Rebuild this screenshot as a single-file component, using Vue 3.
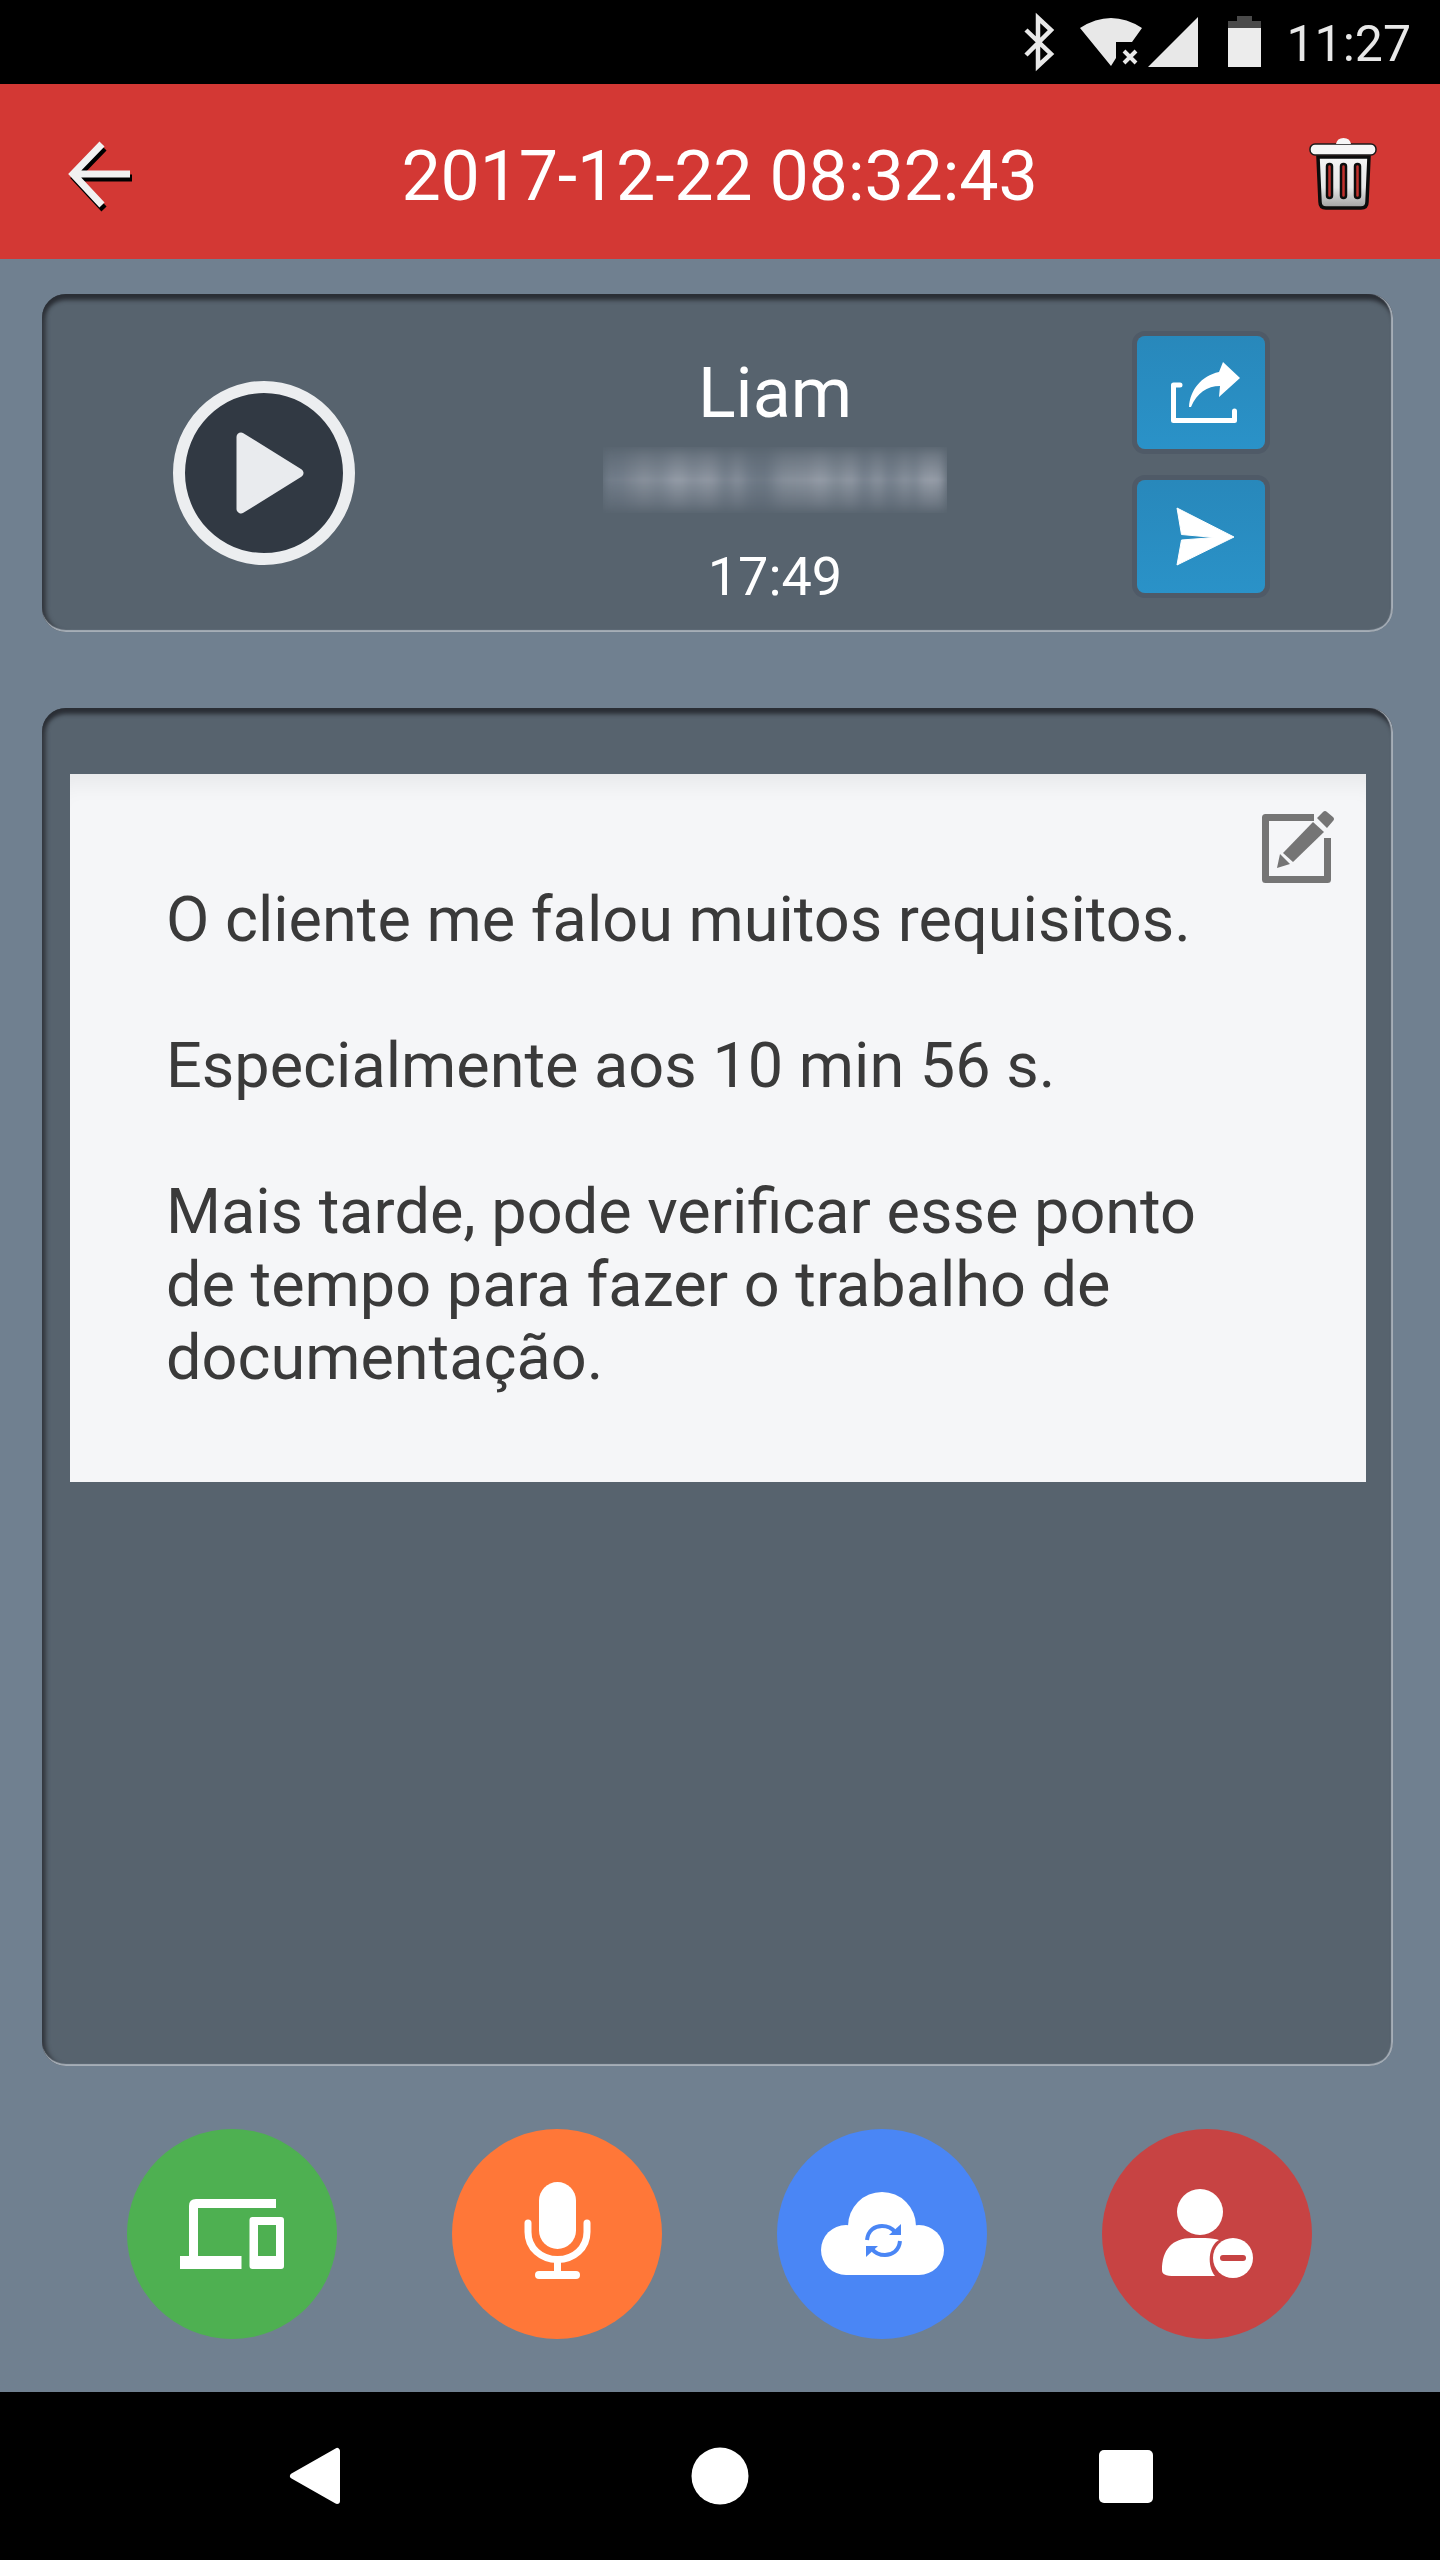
<template>
  <div class="screen">
    <div class="status-bar">
      <svg class="status-icons" viewBox="1020 0 250 84" width="250" height="84">
        <path d="M1027 30 L1052 54 L1039 66 V18 L1052 30 L1027 55" fill="none" stroke="#e8e8e8" stroke-width="4.5" />
        <path d="M1081 28 Q1112 8 1143 28 L1133 42 H1117 V58 L1112 66 Z" fill="#e8e8e8" />
        <path d="M1125 51 L1137 63 M1137 51 L1125 63" stroke="#e8e8e8" stroke-width="4" />
        <path d="M1149 67 L1199 17 V67 Z" fill="#e8e8e8" />
        <path d="M1238 16 H1253 V21 H1262 V28 H1229 V21 H1238 Z" fill="#4a4a4a" />
        <rect x="1229" y="28" width="33" height="39" fill="#ececec" />
      </svg>
      <span class="clock">11:27</span>
    </div>

    <header class="top-bar">
      <svg viewBox="60 131 80 80" width="80" height="80">
        <g fill="none" stroke="#000" stroke-width="7" transform="translate(2 4)">
          <path d="M130 173 H74 M102 143 L73 173 L102 204" />
        </g>
        <g fill="none" stroke="#f1f1f1" stroke-width="7">
          <path d="M130 173 H74 M102 143 L73 173 L102 204" />
        </g>
      </svg>
      <h1 class="top-bar__title">2017-12-22 08:32:43</h1>
      <svg viewBox="1305 131 80 80" width="80" height="80">
        <defs>
          <linearGradient id="trash-fill" x1="0" y1="0" x2="0" y2="1">
            <stop offset="0" stop-color="#f4f4f4" />
            <stop offset="0.6" stop-color="#e6e6e6" />
            <stop offset="1" stop-color="#a0a0a0" />
          </linearGradient>
        </defs>
        <path d="M1318 156 H1369 L1367 201 Q1367 207 1361 207 H1326 Q1320 207 1320 201 Z" fill="url(#trash-fill)" stroke="#0c0c0c" stroke-width="3.5" />
        <rect x="1310" y="143" width="66" height="11" rx="5" fill="#f6f6f6" stroke="#1a1a1a" stroke-width="1.5" />
        <path d="M1336 143 Q1337 137 1343.5 137 Q1350 137 1351 143 Z" fill="#f6f6f6" />
        <g fill="#c0302c" stroke="#0c0c0c" stroke-width="2.5">
          <rect x="1327" y="163" width="5" height="34" rx="2.5" />
          <rect x="1341" y="163" width="5" height="34" rx="2.5" />
          <rect x="1355" y="163" width="5" height="34" rx="2.5" />
        </g>
      </svg>
    </header>

    <main class="content">
      <section class="panel panel--call">
        <div class="play">
          <svg viewBox="236 432 68 82" width="68" height="82">
            <path d="M241 437 L299 473 L241 509 Z" fill="#e9ebee" stroke="#e9ebee" stroke-width="9" stroke-linejoin="round" />
          </svg>
        </div>
        <div class="caller">
          <div class="caller__name">Liam</div>
          <div class="caller__number"></div>
          <div class="caller__time">17:49</div>
        </div>
        <div class="call-actions">
          <div class="square-btn">
            <svg viewBox="1136 336 128 113" width="128" height="113">
              <path d="M1179 385 H1172.5 V420.5 H1233.5 V411" fill="none" stroke="#fff" stroke-width="5" stroke-linecap="round" stroke-linejoin="round" />
              <path d="M1188 407 C1189 390 1200 376 1218 372 L1222 362 L1239 378 L1218 397 L1219 386 C1206 386 1196 393 1190 407 Z" fill="#fff" />
            </svg>
          </div>
          <div class="square-btn">
            <svg viewBox="1136 480 128 113" width="128" height="113">
              <path d="M1176 508 L1233 537 L1176 565 L1180.5 540 L1213.5 537.5 L1180.5 534.5 Z" fill="#fff" stroke="#fff" stroke-width="1" stroke-linejoin="round" />
            </svg>
          </div>
        </div>
      </section>

      <section class="panel panel--note">
        <div class="note">
          <svg class="note__edit" viewBox="1262 810 72 74" width="72" height="74">
            <path d="M1314 817.5 H1265.5 V879.5 H1327.5 V838" fill="none" stroke="#757575" stroke-width="7" stroke-linejoin="round" />
            <path d="M1283 853 L1313 822 L1324 832 L1293 862 Z" fill="#757575" />
            <path d="M1280 854 L1277 868 L1290 864 Z" fill="#757575" />
            <path d="M1317 818 L1323 812 Q1325 810 1327 812 L1333 817 Q1335 819 1333 821 L1327 828 Z" fill="#757575" />
          </svg>
          <p v-for="text in noteParagraphs" :key="text" class="note__text">{{ text }}</p>
        </div>
      </section>

      <div class="round-actions">
        <div class="round-btn round-btn--green">
          <svg viewBox="127 2129 210 210" width="210" height="210">
            <path d="M198 2208 H276 V2199 H196 Q189 2199 189 2206 V2256 H180 V2269 H241.5 V2256 H198 Z" fill="#fff" />
            <path fill-rule="evenodd" d="M252.5 2217 H281 Q284 2217 284 2220 V2266 Q284 2269 281 2269 H252.5 Q249.5 2269 249.5 2266 V2220 Q249.5 2217 252.5 2217 Z M258 2225 V2256 H276 V2225 Z" fill="#fff" />
          </svg>
        </div>
        <div class="round-btn round-btn--orange">
          <svg viewBox="452 2129 210 210" width="210" height="210">
            <rect x="539" y="2182" width="37" height="67" rx="18.5" fill="#fff" />
            <path d="M528 2223 V2232 C528 2248 541 2259.5 557.5 2259.5 C574 2259.5 587 2248 587 2232 V2223" fill="none" stroke="#fff" stroke-width="7" stroke-linecap="round" />
            <path d="M557.5 2260 V2275" stroke="#fff" stroke-width="7" />
            <rect x="535" y="2271" width="45" height="8" rx="4" fill="#fff" />
          </svg>
        </div>
        <div class="round-btn round-btn--blue">
          <svg viewBox="777 2129 210 210" width="210" height="210">
            <g fill="#fff">
              <circle cx="882" cy="2226" r="34" />
              <circle cx="846" cy="2250" r="25" />
              <circle cx="919" cy="2250" r="25" />
              <rect x="846" y="2235" width="73" height="40" />
            </g>
            <path d="M867 2240 C868 2230 875 2226 882 2226 C888 2226 892 2228 895 2232" fill="none" stroke="#4a86f5" stroke-width="4" />
            <path d="M901 2224 V2235 H889 Z" fill="#4a86f5" />
            <path d="M900 2241 C899 2251 892 2255 885 2255 C879 2255 875 2253 872 2249" fill="none" stroke="#4a86f5" stroke-width="4" />
            <path d="M866 2257 V2246 H878 Z" fill="#4a86f5" />
          </svg>
        </div>
        <div class="round-btn round-btn--red">
          <svg viewBox="1102 2129 210 210" width="210" height="210">
            <circle cx="1200" cy="2212" r="23" fill="#fff" />
            <path d="M1162 2270 C1162 2250 1172 2238 1192 2238 H1205 C1211 2238 1216 2239 1219 2240 C1208 2246 1207 2266 1215 2276 H1175 C1165 2276 1162 2274 1162 2270 Z" fill="#fff" />
            <circle cx="1233" cy="2258" r="20" fill="#fff" />
            <rect x="1220" y="2255" width="26" height="6" rx="3" fill="#c74343" />
          </svg>
        </div>
      </div>
    </main>

    <nav class="nav-bar">
      <svg viewBox="280 2392 880 168" width="880" height="168">
        <path d="M337 2451 V2501 L293 2476 Z" fill="#fff" stroke="#fff" stroke-width="6" stroke-linejoin="round" />
        <circle cx="720" cy="2476" r="28.5" fill="#fff" />
        <rect x="1099" y="2450" width="54" height="53" rx="5" fill="#fff" />
      </svg>
    </nav>
  </div>
</template>

<script setup>
const noteParagraphs = [
  'O cliente me falou muitos requisitos.',
  'Especialmente aos 10 min 56 s.',
  'Mais tarde, pode verificar esse ponto de tempo para fazer o trabalho de documentação.',
];
</script>

<style>
html,
body {
  margin: 0;
  background: #000;
}
</style>

<style scoped>
.screen {
  width: 1440px;
  height: 2560px;
  display: flex;
  flex-direction: column;
  background: #708090;
  font-family: Roboto, "Liberation Sans", sans-serif;
}

.status-bar {
  height: 84px;
  flex: none;
  display: flex;
  justify-content: flex-end;
  background: #000;
  padding-right: 29px;
  box-sizing: border-box;
}

.status-icons {
  display: block;
}

.clock {
  margin-left: 17px;
  padding-top: 16px;
  font-size: 50px;
  line-height: 56px;
  color: #e8e8e8;
}

.top-bar {
  height: 175px;
  flex: none;
  display: flex;
  align-items: center;
  padding: 0 55px 0 60px;
  background: #d33834;
  box-sizing: border-box;
}

.top-bar__title {
  flex: 1;
  margin: 8px 6px 0 0;
  text-align: center;
  font-size: 70px;
  font-weight: 400;
  line-height: 82px;
  letter-spacing: -0.25px;
  color: #fff;
}

.content {
  flex: 1;
  display: flex;
  flex-direction: column;
  padding: 35px 47px 0 42px;
}

.panel {
  background: #57636e;
  border-radius: 24px;
  box-sizing: border-box;
  box-shadow:
    inset 0 -3px 1px -1px #a6aeb7,
    inset -3px 0 1px -1px #a6aeb7,
    inset 0 7px 4px -1px #2a2e35,
    inset 6px 0 4px -2px #363b42;
}

.panel--call {
  height: 338px;
  display: flex;
  align-items: flex-start;
  padding-left: 131px;
  padding-right: 128px;
}

.play {
  width: 182px;
  height: 184px;
  margin-top: 87px;
  flex: none;
  display: flex;
  align-items: center;
  justify-content: center;
  border: 12px solid #eceef0;
  border-radius: 50%;
  background: #313943;
  box-sizing: border-box;
}

.play svg {
  margin-left: 11px;
}

.caller {
  flex: 1;
  display: flex;
  flex-direction: column;
  align-items: center;
  padding-left: 58px;
  padding-top: 58px;
  color: #fff;
}

.caller__name {
  font-size: 70px;
  line-height: 82px;
}

.caller__number {
  width: 344px;
  height: 66px;
  margin-top: 13px;
  background: linear-gradient(
    90deg,
    #727d8a 0,
    #727d8a 5%,
    #8a929d 12%,
    #7e8894 16%,
    #979ea9 22%,
    #858e9a 26%,
    #939aa5 31%,
    #727d8a 36%,
    #8b939e 39%,
    #727d8a 42%,
    #6b7683 47%,
    #868f9a 52%,
    #8a929d 60%,
    #979ea9 63%,
    #808a95 68%,
    #939aa5 72%,
    #727d8a 76%,
    #8e96a1 80%,
    #727d8a 83%,
    #8e96a1 89%,
    #727d8a 90%,
    #959ca7 93%,
    #959ca7 98%,
    #727d8a 100%
  );
  filter: blur(5px);
  -webkit-mask-image: linear-gradient(180deg, rgba(0, 0, 0, 0.2), #000 50%, rgba(0, 0, 0, 0.15));
  mask-image: linear-gradient(180deg, rgba(0, 0, 0, 0.2), #000 50%, rgba(0, 0, 0, 0.15));
}

.caller__time {
  margin-top: 33px;
  font-size: 54px;
  line-height: 62px;
}

.call-actions {
  width: 128px;
  flex: none;
  display: flex;
  flex-direction: column;
  gap: 31px;
  padding-top: 42px;
}

.square-btn {
  width: 128px;
  height: 113px;
  border-radius: 8px;
  background: linear-gradient(180deg, #2888bb, #2a92c8);
  box-shadow: 0 0 0 5px #4f5a67;
}

.square-btn svg {
  display: block;
}

.panel--note {
  height: 1358px;
  margin-top: 76px;
  padding: 66px 27px 0 28px;
}

.note {
  position: relative;
  height: 708px;
  padding: 109px 98px 0 96px;
  background: #f5f6f8;
  box-sizing: border-box;
  box-shadow: inset 0 26px 22px -16px rgba(0, 0, 0, 0.06);
}

.note__edit {
  position: absolute;
  top: 36px;
  left: 1192px;
}

.note__text {
  margin: 0 0 73px;
  font-size: 63px;
  line-height: 73px;
  color: #3a3a3a;
}

.round-actions {
  display: flex;
  justify-content: space-between;
  margin-top: 63px;
  padding: 0 81px 0 85px;
}

.round-btn {
  width: 210px;
  height: 210px;
  border-radius: 50%;
}

.round-btn svg {
  display: block;
}

.round-btn--green {
  background: #4eb051;
}

.round-btn--orange {
  background: #ff7738;
}

.round-btn--blue {
  background: #4a86f5;
}

.round-btn--red {
  background: #c74343;
}

.nav-bar {
  height: 168px;
  flex: none;
  display: flex;
  justify-content: center;
  background: #000;
}
</style>
